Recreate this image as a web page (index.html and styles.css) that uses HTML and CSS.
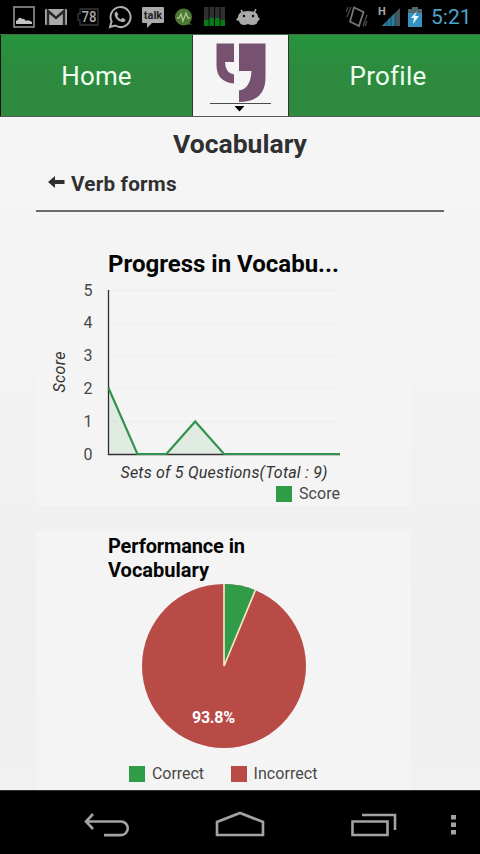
FILE: index.html
```html
<!DOCTYPE html>
<html lang="en">
<head>
<meta charset="utf-8">
<title>Vocabulary</title>
<link rel="stylesheet" href="styles.css">
</head>
<body>
<div class="phone">
  <div class="status">
    <div class="notifications">
      <svg width="22" height="22" viewBox="0 0 22 22"><rect x="1" y="1" width="20" height="20" fill="none" stroke="#929292" stroke-width="1.6"/><path d="M3 18v-3q2-1 3-3 2-1 3 1 2-1 4 2 2-2 6 1v2z" fill="#c4c4c4"/></svg>
      <svg width="22" height="22" viewBox="0 0 22 22"><rect y="3" width="22" height="16" rx="1" fill="#aaa"/><path d="M3 19V5l8 7 8-7v14" fill="none" stroke="#262626" stroke-width="2.4"/></svg>
      <svg width="22" height="22" viewBox="0 0 22 22"><path d="M3 8V3h18v16H3v-5H1V8z" fill="none" stroke="#383838" stroke-width="1.3"/><text x="12" y="15.800" class="level" text-anchor="middle" textLength="15" lengthAdjust="spacingAndGlyphs">78</text></svg>
      <svg class="call" width="24" height="24" viewBox="0 0 24 24"><path d="M2 22l1.600-5.500A10 10 0 1 1 7.200 20.500z" fill="none" stroke="#b0b0b0" stroke-width="2"/><path d="M8.500 6.500l2 3-1.200 1.500c.8 1.600 1.800 2.600 3.600 3.400l1.500-1.600 3 1.600c0 2-1.600 3-3.400 2.600-4-.9-7-4-7.400-7.500-.1-1.500.8-2.700 1.900-3z" fill="#b0b0b0"/></svg>
      <svg width="22" height="24" viewBox="0 0 22 24"><path d="M1 2h20q1 0 1 1v14q0 1-1 1H10l-5 5v-5H1q-1 0-1-1V3q0-1 1-1z" fill="#aaa"/><text x="11" y="14" class="talk" text-anchor="middle">talk</text></svg>
      <svg width="20" height="22" viewBox="0 0 20 22"><circle cx="9.500" cy="11" r="8.500" fill="#4d7833"/><path d="M14 16l4 2.500h-7z" fill="#4d7833"/><path d="M3 12h2l2-4 2 7 3-8 2 5h2" fill="none" stroke="#a9c996" stroke-width="1.300"/></svg>
      <svg width="22" height="22" viewBox="0 0 22 22"><path d="M0 1h4.500v19H0zM5.500 1H10v19H5.500zM11 1h4.500v19H11zM16.500 1H21v19h-4.500z" fill="#303030"/><path d="M0 14h4.500v6H0zM5.500 12H10v8H5.500zM11 12h4.500v8H11zM16.500 14H21v6h-4.500z" fill="#087c14"/></svg>
      <svg width="24" height="20" viewBox="0 0 24 20"><path d="M5 3l2 3M20 2l-2 4" stroke="#aaa" stroke-width="1.500"/><path d="M2 10q0-6 10-6t10 6l2 2-2 2q-1 4-6 4-2 0-4-1-2 1-4 1-4 0-5-4l-3-1z" fill="#aaa"/><circle cx="8" cy="9" r="1.300" fill="#111"/><circle cx="17" cy="9" r="1.300" fill="#111"/></svg>
    </div>
    <div class="system">
      <svg class="vibrate" width="22" height="24" viewBox="0 0 22 24"><path d="M8 2.500l9.500 4.500-4.500 14-9-4.500z" fill="none" stroke="#777" stroke-width="1.800"/><path d="M5 2L1 12M2 2L0 7M21 10l-4 11M21 16l-2 5" stroke="#4c4c4c" stroke-width="1.300"/></svg>
      <svg class="signal" width="24" height="24" viewBox="0 0 24 24"><path d="M4 21L22 3v18z" fill="#47545a"/><path d="M4 21L17 8v13z" fill="#2c7da0"/><path d="M9 16v5M13 12v9M17 8v13" stroke="#17485d"/><text x="0" y="10" class="network">H</text></svg>
      <svg class="battery" width="14" height="20" viewBox="0 0 14 20"><path d="M4 0h6v2h4v6H0V2h4z" fill="#53676f"/><path d="M0 6h14v14H0z" fill="#3594bd"/><path d="M9 4L3 11h3l-1 6 6-8H7z" fill="#e8f8ff"/></svg>
      <span class="clock">5:21</span>
    </div>
  </div>

  <div class="tabs">
    <div class="tab home"><span>Home</span></div>
    <div class="logo">
      <svg width="62" height="72" viewBox="0 0 62 72"><path d="M6.500 3.500H24V22h-9q.5 11.500 9 12.500v9Q6.500 42 6.500 25zM29 3.500h26.500V37Q55.500 62 29 62V50.500Q40.500 49 41.500 31H29z" fill="#775170"/><path d="M0 63.500h61" stroke="#4b4b4b"/><path d="M24.500 66h10l-5 5.500z" fill="#000"/></svg>
    </div>
    <div class="tab profile"><span>Profile</span></div>
  </div>

  <main class="content">
    <h1 class="title">Vocabulary</h1>
    <div class="back">
      <svg width="17" height="12" viewBox="0 0 17 12"><path d="M0 6l7-6v4h9.500v4H7v4z" fill="#303030"/></svg>
      <span>Verb forms</span>
    </div>
    <section class="card progress">
      <svg width="375" height="256" viewBox="36 250 375 256">
        <text x="108" y="272" class="heading large" textLength="231">Progress in Vocabu...</text>
        <path d="M109 290.500h231M109 323.500h231M109 356.500h231M109 388.500h231M109 421.500h231" stroke="#ededed"/>
        <g class="label" text-anchor="middle">
          <text x="88" y="295.500">5</text><text x="88" y="328.300">4</text><text x="88" y="361.100">3</text><text x="88" y="393.900">2</text><text x="88" y="426.700">1</text><text x="88" y="459.500">0</text>
        </g>
        <text class="label axis" text-anchor="middle" transform="translate(65 372) rotate(-90)" textLength="41">Score</text>
        <path d="M108.500 388L137.400 454h29L195.200 421.500 224 454H108.500z" fill="#2f9b48" fill-opacity=".1"/>
        <path d="M108.500 290v164.500H340" fill="none" stroke="#303030" stroke-width="1.300"/>
        <path d="M108.500 388L137.400 454h29L195.200 421.500 224 454H340" fill="none" stroke="#33924d" stroke-width="2.200"/>
        <text x="120.500" y="477.500" class="label axis" textLength="207">Sets of 5 Questions(Total : 9)</text>
        <rect x="276" y="486" width="16" height="16" fill="#309c48"/>
        <text x="299" y="499.300" class="label" textLength="41">Score</text>
      </svg>
    </section>
    <section class="card performance">
      <svg width="375" height="259" viewBox="36 531 375 259">
        <text x="108" y="552.500" class="heading" textLength="137">Performance in</text>
        <text x="108" y="576.500" class="heading" textLength="101">Vocabulary</text>
        <circle cx="224" cy="666" r="82" fill="#b94b47"/>
        <path d="M224 666V584A82 82 0 0 1 255.400 590.200z" fill="#309c48"/>
        <path d="M224 584v82L255.400 590.200" fill="none" stroke="#f5e3c3" stroke-width="1.700"/>
        <text x="192" y="723" class="percent" textLength="43">93.8%</text>
        <rect x="129" y="766" width="16" height="16" fill="#309c48"/>
        <text x="152" y="779.300" class="label" textLength="52">Correct</text>
        <rect x="231" y="766" width="16" height="16" fill="#b94b47"/>
        <text x="253.500" y="779.300" class="label" textLength="64">Incorrect</text>
      </svg>
    </section>
  </main>

  <nav class="navbar">
    <svg class="nav-back" width="46" height="28" viewBox="0 0 46 28"><path d="M9 3L2 10.500 9 18M2.500 10.500H37a6.800 6.800 0 0 1 0 13.600H20" /></svg>
    <svg class="nav-home" width="50" height="28" viewBox="0 0 50 28"><path d="M2 24V11L25 2l23 9v13z"/></svg>
    <svg class="nav-recent" width="46" height="28" viewBox="0 0 46 28"><path d="M1.500 10.500h35V24h-35zM11 4h33v15"/></svg>
    <svg class="nav-more" width="5" height="20" viewBox="0 0 5 20"><path d="M0 0h5v4.500H0zM0 7.500h5V12H0zM0 15h5v4.500H0z"/></svg>
  </nav>
</div>
</body>
</html>
```

FILE: styles.css
```css
* { box-sizing: border-box; }
body { margin: 0; font-family: Roboto, sans-serif; background: #000; }
svg { display: block; flex: none; }
.phone { width: 480px; height: 854px; display: flex; flex-direction: column; overflow: hidden; }
.status { height: 34px; flex: none; background: #000; display: flex; justify-content: space-between; align-items: center; padding: 0 9px 1px 13px; }
.notifications { display: flex; align-items: center; gap: 10px; }
.call { margin: 0 0 0 -1px; }
.level { font: 500 14px "Roboto", sans-serif; fill: #aaa; }
.talk { font: 700 11px "Roboto", sans-serif; fill: #222; }
.network { font: 700 11px "Roboto", sans-serif; fill: #aaa; }
.system { display: flex; align-items: center; }
.vibrate { margin-right: 10px; }
.signal { margin-right: 6px; }
.battery { margin-right: 9px; }
.clock { width: 40px; font-size: 21px; line-height: 32px; color: #4ba5cb; white-space: nowrap; }
.tabs { height: 83px; flex: none; display: grid; grid-template-columns: 192px 97px 191px; background: #f5f5f5; border-top: 1px solid #3b6e44; border-bottom: 1px solid #555; }
.tab { background: linear-gradient(#26943d, #2d8a3e 45%); display: flex; align-items: center; justify-content: center; color: #effff0; font-size: 26px; }
.tab span { line-height: 30px; padding-top: 1px; }
.home { border-left: 1px solid #111; }
.home span { letter-spacing: .15px; }
.profile { padding-left: 7px; }
.profile span { letter-spacing: .25px; }
.logo { display: flex; justify-content: center; padding: 5px 0 0 1px; border: solid #333; border-width: 0 1px; }
.content { flex: 1; min-height: 0; overflow: hidden; padding: 0 36px; background: linear-gradient(#f5f5f5, #f3f3f3 35%, #efefef 75%, #f1f1f1); }
.title { margin: 10px 0 0; text-align: center; font-size: 26.5px; line-height: 34px; font-weight: 700; color: #303033; }
.back { width: 408px; height: 51px; display: flex; align-items: flex-start; gap: 6px; padding: 11px 0 0 12px; border-bottom: 2px solid #6a6a6a; font-size: 20.7px; letter-spacing: .2px; line-height: 24px; font-weight: 700; color: #303030; }
.back svg { margin-top: 4px; }
.card { width: 375px; background: #f4f4f4; }
.progress { height: 256px; margin-top: 38px; }
.performance { height: 259px; margin-top: 25px; }
.heading { font-size: 20px; font-weight: 700; fill: #050505; }
.large { font-size: 24px; }
.label { font-size: 16px; fill: #484848; }
.axis { font-style: italic; fill: #333; }
.percent { font-size: 16px; font-weight: 700; fill: #fff; }
.navbar { height: 64px; flex: none; background: #000; border-top: 1px solid #333; display: flex; align-items: center; padding-top: 4px; }
.navbar path { fill: none; stroke: #a3a3a3; stroke-width: 2.6; }
.nav-back { margin-left: 84px; }
.nav-home { margin-left: 85px; }
.nav-recent { margin-left: 86px; }
.nav-more { margin-left: 54px; }
.navbar .nav-more path { fill: #a3a3a3; stroke: none; }
```
